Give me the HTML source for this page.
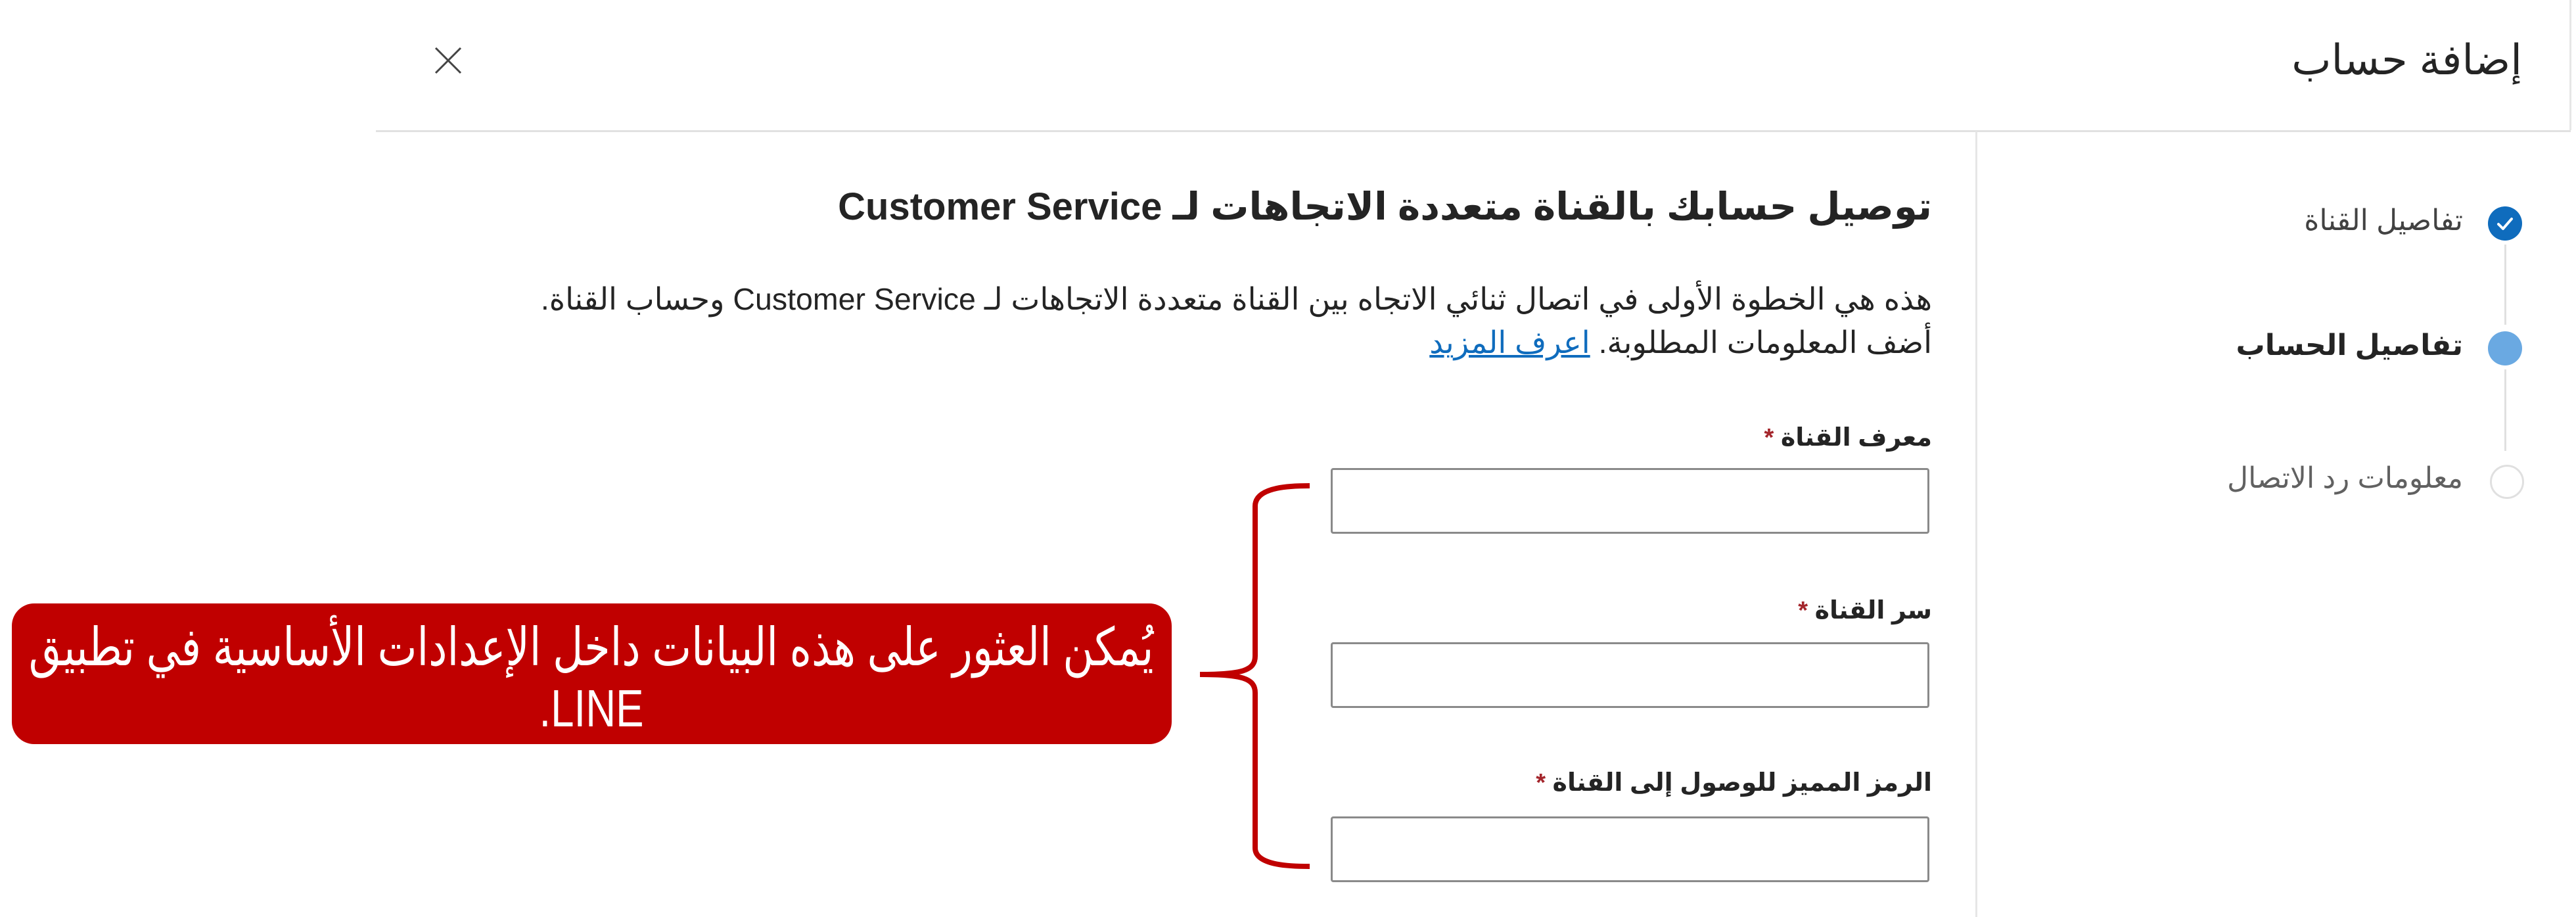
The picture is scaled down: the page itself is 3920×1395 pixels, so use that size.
<!DOCTYPE html>
<html><head><meta charset="utf-8"><style>
html,body{margin:0;padding:0;}
body{width:3920px;height:1395px;position:relative;background:#fff;overflow:hidden;font-family:"Liberation Sans","DejaVu Sans",sans-serif;color:#242424;}
.a{position:absolute;white-space:nowrap;}
.r{direction:rtl;text-align:right;}
.inp{position:absolute;left:2025px;width:911px;height:100px;border:3px solid #8a8a8a;border-radius:4px;box-sizing:border-box;background:#fff;}
.lbl{font-weight:bold;font-size:38px;}
.lbl span{color:#a4262c;}
.ct{position:absolute;left:-1100px;width:4000px;text-align:center;color:#fff;font-size:80px;direction:rtl;white-space:nowrap;}
.ct span{display:inline-block;transform:scaleX(0.795);transform-origin:center;}
</style></head><body>
<!-- header -->
<div class="a" style="left:572px;top:0;width:3340px;height:198px;border-bottom:3px solid #e1e1e1;"></div>
<div class="a" style="left:3910px;top:0;width:3px;height:198px;background:#e6e6e6;"></div>
<div class="a r" style="right:82px;top:54px;font-size:64px;">إضافة حساب</div>
<svg class="a" style="left:660px;top:70px" width="44" height="44" viewBox="0 0 44 44"><path d="M3 3L41 41M41 3L3 41" stroke="#444" stroke-width="3"/></svg>
<!-- divider -->
<div class="a" style="left:3006px;top:200px;width:3px;height:1195px;background:#e6e6e6;"></div>
<!-- steps -->
<div class="a" style="left:3786px;top:314px;width:52px;height:52px;border-radius:50%;background:#0f6cbd;"></div>
<svg class="a" style="left:3786px;top:314px" width="52" height="52" viewBox="0 0 52 52"><path d="M16 27L23 34L36 19" stroke="#fff" stroke-width="4" fill="none" stroke-linecap="round" stroke-linejoin="round"/></svg>
<div class="a" style="left:3811px;top:372px;width:3px;height:122px;background:#e0e0e0;"></div>
<div class="a" style="left:3786px;top:504px;width:52px;height:52px;border-radius:50%;background:#6aa9e2;"></div>
<div class="a" style="left:3811px;top:562px;width:3px;height:124px;background:#e0e0e0;"></div>
<div class="a" style="left:3789px;top:707px;width:46px;height:46px;border-radius:50%;border:3px solid #e0e0e0;box-sizing:content-box;"></div>
<div class="a r" style="right:172px;top:310px;font-size:44px;color:#424242;">تفاصيل القناة</div>
<div class="a r" style="right:172px;top:500px;font-size:44px;font-weight:bold;">تفاصيل الحساب</div>
<div class="a r" style="right:172px;top:702px;font-size:44px;color:#616161;">معلومات رد الاتصال</div>
<!-- content -->
<div class="a r" style="right:980px;top:280px;font-size:58px;font-weight:bold;">توصيل حسابك بالقناة متعددة الاتجاهات لـ Customer Service</div>
<div class="a r" style="right:980px;top:428px;font-size:46.5px;">هذه هي الخطوة الأولى في اتصال ثنائي الاتجاه بين القناة متعددة الاتجاهات لـ Customer Service وحساب القناة.</div>
<div class="a r" style="right:980px;top:494px;font-size:46.5px;">أضف المعلومات المطلوبة. <span style="color:#0f6cbd;text-decoration:underline;">اعرف المزيد</span></div>
<div class="a r lbl" style="right:980px;top:643px;">معرف القناة <span>*</span></div>
<div class="inp" style="top:712px;"></div>
<div class="a r lbl" style="right:980px;top:906px;">سر القناة <span>*</span></div>
<div class="inp" style="top:977px;"></div>
<div class="a r lbl" style="right:980px;top:1168px;">الرمز المميز للوصول إلى القناة <span>*</span></div>
<div class="inp" style="top:1242px;"></div>
<!-- brace -->
<svg class="a" style="left:1810px;top:730px" width="200" height="600" viewBox="0 0 200 600"><path d="M183 9C160 9 100 9 100 40L100 268C100 290 80 296 16 296C80 296 100 302 100 324L100 560C100 588 160 588 183 588" stroke="#c00000" stroke-width="8" fill="none"/></svg>
<!-- callout -->
<div class="a" style="left:18px;top:918px;width:1765px;height:214px;border-radius:34px;background:#c00000;"></div>
<div class="ct" style="top:935px;line-height:100px;"><span>يُمكن العثور على هذه البيانات داخل الإعدادات الأساسية في تطبيق</span></div>
<div class="ct" style="top:1028px;line-height:100px;"><span>LINE.</span></div>
</body></html>
